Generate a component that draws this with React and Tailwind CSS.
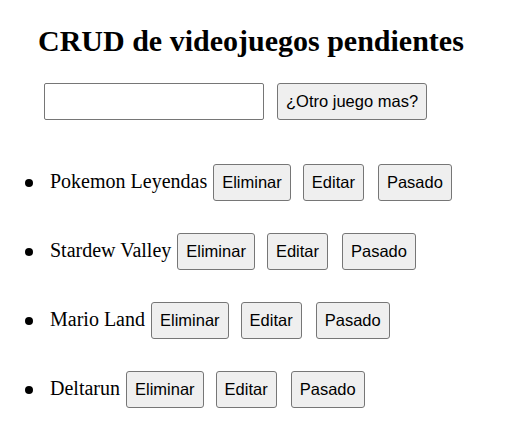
import React from "react";

const games = ["Pokemon Leyendas", "Stardew Valley", "Mario Land", "Deltarun"];

const btn =
  "h-[37px] px-[8px] border border-[#767676] rounded-[3px] bg-[#efefef] text-black text-[16.5px] leading-none font-['Liberation_Sans',Arial,sans-serif]";

export default function App() {
  return (
    <div className="bg-white min-h-[446px] pt-[24px] font-['Liberation_Serif','Times_New_Roman',serif] text-black">
      <h1 className="ml-[38px] text-[30px] leading-[34px] font-bold">
        CRUD de videojuegos pendientes
      </h1>
      <div className="mt-[25px] ml-[44px] flex items-center gap-[13px]">
        <input
          type="text"
          className="w-[220px] h-[37px] border border-[#767676] rounded-[2px] bg-white px-[2px] text-[16.5px] font-['Liberation_Sans',Arial,sans-serif] outline-none"
        />
        <button className={btn}>¿Otro juego mas?</button>
      </div>
      <ul className="mt-[44px] flex flex-col gap-[32px]">
        {games.map((g) => (
          <li key={g} className="flex items-baseline h-[37px]">
            <span className="self-center ml-[25px] w-[8px] h-[8px] rounded-full bg-black"></span>
            <span className="ml-[17px] text-[20px] leading-[23px]">{g}</span>
            <button className={btn + " ml-[6px]"}>Eliminar</button>
            <button className={btn + " ml-[12px]"}>Editar</button>
            <button className={btn + " ml-[14px]"}>Pasado</button>
          </li>
        ))}
      </ul>
    </div>
  );
}
